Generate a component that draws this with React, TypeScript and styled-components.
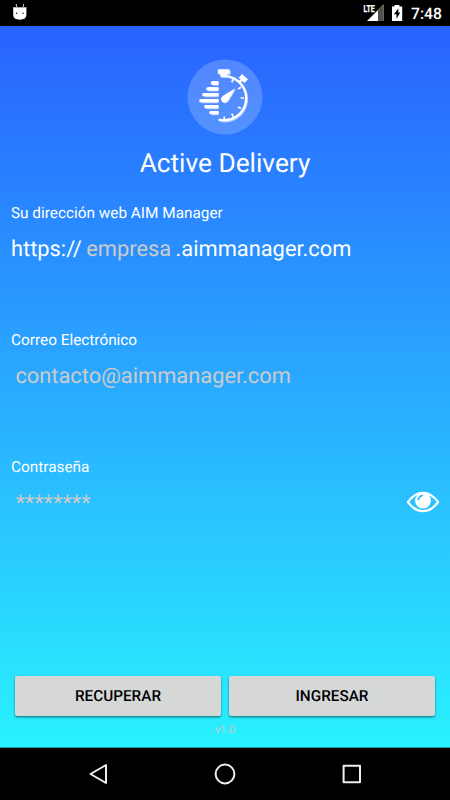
import React from 'react';
import styled, { createGlobalStyle } from 'styled-components';

const GlobalStyle = createGlobalStyle`
  *, *::before, *::after { box-sizing: border-box; }
  html, body { margin: 0; padding: 0; background: #000; }
  body { font-family: Roboto, sans-serif; overflow: hidden; text-rendering: geometricPrecision; }
`;

const Phone = styled.div`
  width: 450px;
  height: 800px;
  display: flex;
  flex-direction: column;
  background: #000;
`;

const StatusBar = styled.header`
  height: 26px;
  flex: none;
  display: flex;
  justify-content: space-between;
  background: #000;
  svg { display: block; flex: none; }
`;

const StatusGroup = styled.div`
  display: flex;
  align-items: flex-start;
`;

const Clock = styled.span`
  width: 39px;
  font-size: 15.7px;
  font-weight: 500;
  line-height: 27px;
  color: #fff;
  white-space: nowrap;
`;

const Screen = styled.main`
  height: 722px;
  flex: none;
  display: flex;
  flex-direction: column;
  background: linear-gradient(#2962ff, #29f2ff);
  border-bottom: 1px solid #1a98a3;
`;

const Brand = styled.div`
  height: 177px;
  flex: none;
  display: flex;
  flex-direction: column;
  align-items: center;
  padding-top: 33px;
  svg { display: block; flex: none; }
`;

const Title = styled.h1`
  margin: 14px 0 0;
  font-size: 26.25px;
  font-weight: 400;
  line-height: 30px;
  color: #fff;
`;

const Field = styled.div`
  height: 127px;
  flex: none;
  padding: 0 11px;
`;

const Label = styled.div`
  height: 33px;
  font-size: 15.35px;
  line-height: 21px;
  color: #fff;
`;

const Entry = styled.div<{ $inset?: number }>`
  display: flex;
  align-items: center;
  height: 28px;
  padding-left: ${(p) => p.$inset ?? 0}px;
  font-size: 21.85px;
  line-height: 28px;
  color: #fff;
  white-space: pre;
  svg { display: block; flex: none; margin: -5px 0 0 auto; }
`;

const Hint = styled.span<{ $gap?: number }>`
  color: #cbcbcb;
  margin: 0 ${(p) => p.$gap ?? 0}px;
`;

const Actions = styled.div`
  display: flex;
  gap: 8px;
  padding: 0 15px;
  margin-top: auto;
`;

const Button = styled.button`
  flex: 1;
  height: 40px;
  border: 0;
  padding: 0;
  border-radius: 2px;
  background: #d6d7d7;
  box-shadow: 0 1px 2px rgba(0, 0, 0, 0.45), 0 2px 3px rgba(0, 0, 0, 0.12);
  font: 500 15.3px/40px Roboto, sans-serif;
  text-rendering: inherit;
  color: #000;
`;

const Version = styled.div`
  height: 31px;
  padding-top: 7px;
  font-size: 11px;
  line-height: 14px;
  text-align: center;
  color: #c3cccd;
`;

const NavBar = styled.nav`
  height: 52px;
  flex: none;
  display: flex;
  justify-content: center;
  gap: 97px;
  padding-top: 11px;
`;

const DroidIcon = () => (
  <svg width="40" height="26" viewBox="0 0 40 26">
    <path d="M13.2 7.2h13.2v7.3q0 5.2-6.6 5.2t-6.6-5.2z" fill="#fff" />
    <path d="M16.8 7.5 16.2 4M23 7.5 23.6 4" stroke="#ccc" strokeWidth="1" />
    <path d="M15 7.6h9.5" stroke="#aaa" strokeWidth="1" />
    <circle cx="16.6" cy="13.2" r=".8" fill="#222" />
    <circle cx="23" cy="13.2" r=".8" fill="#222" />
  </svg>
);

const SignalIcon = () => (
  <svg width="28" height="26" viewBox="0 0 28 26">
    <path d="M21.5 4.5V21H5z" fill="#fff" />
    <path d="M16 10 21.5 4.5V21H16z" fill="#505050" />
    <path d="M0 0h13v13H0z" fill="#000" />
    <text x="1.5" y="12.2" fontFamily="Roboto, sans-serif" fontSize="9.8" fontWeight="700" fill="#fff" stroke="#fff" strokeWidth=".3" textLength="11" lengthAdjust="spacingAndGlyphs">LTE</text>
  </svg>
);

const BatteryIcon = () => (
  <svg width="21" height="26" viewBox="0 0 21 26">
    <path d="M4.4 5h5V6.6h2.8v14.3H2V6.6h2.4z" fill="#fff" />
    <path d="M8.3 8.5 3.9 14.3h2.6v4.4L10.3 12.6H8.3z" fill="#000" />
  </svg>
);

const StopwatchLogo = () => (
  <svg width="76" height="76" viewBox="0 0 76 76">
    <circle cx="38" cy="38" r="37.5" fill="#fff" fillOpacity=".2" />
    <g transform="translate(1 1)" stroke="#a9c4ff" fill="none">
      <path d="M32 60.8A22.1 22.1 0 1 0 42 17.7" strokeWidth="2" />
      <path d="M25.3 24H30.5M20.8 29.8H30.5M16.8 35.7H30.5M13.8 41.7H30.5M18.8 47.7H30.5M23.8 53.6H30.5" strokeWidth="3.3" />
      <path d="M30.8 10.7h12v4.3h-2.5v3h-7v-3h-2.5z" fill="#a9c4ff" stroke="none" />
    </g>
    <g stroke="#fff" fill="none">
      <path d="M31.5 60.6A22.1 22.1 0 1 0 39 17.2" strokeWidth="2.3" />
      <path d="M46.3 20.3l-1.6 3M54 28.2l-2.9 1.7M57 39h-3.3M54 49.6l-2.9-1.7M46.3 57.6l-1.6-3M37.3 61v-3.4" strokeWidth="1.7" />
      <path d="m52 23.5 4-4" strokeWidth="2.4" />
      <path d="m55.2 18.5 2.2 2" strokeWidth="5" strokeLinecap="square" />
      <path d="M25.3 24H31.5M20.8 29.8H31.5M16.8 35.7H31.5M13.8 41.7H31.5M18.8 47.7H31.5M23.8 53.6H31.5" strokeWidth="3.3" />
      <path d="M25.3 24H30M20.8 29.8H30M16.8 35.7H30M13.8 41.7H30M18.8 47.7H30M23.8 53.6H30" strokeWidth="3.3" strokeLinecap="round" />
    </g>
    <path d="M31.3 10.8h10.8v3.6h-2.4v3.2h-5.8v-3.2h-2.6z" fill="#fff" stroke="#fff" strokeLinejoin="round" />
    <path d="M49 30.3 41.6 42.2q-2.6 3.5-5.5 1.3-2.6-2.6.6-5.2z" fill="#c5d7ff" />
    <path d="M48.3 29.3 41 41.3q-2.8 3.7-5.9 1.3-2.6-2.8.6-5.6z" fill="#fff" />
  </svg>
);

const EyeIcon = () => (
  <svg width="32" height="24" viewBox="0 0 32 24">
    <path d="M.8 12Q7.5 2.8 16 2.8T31.2 12Q24.5 21.2 16 21.2T.8 12Z" fill="none" stroke="#fff" strokeWidth="2.2" />
    <circle cx="16" cy="10.6" r="7.9" fill="#fff" />
    <path d="M11.2 9.6q.8-3.4 4.2-4.1" fill="none" stroke="#29bdff" strokeWidth="1.7" strokeLinecap="round" />
  </svg>
);

const NavIcon = ({ kind }: { kind: 'back' | 'home' | 'recent' }) => (
  <svg width="30" height="30" viewBox="0 0 30 30" fill="none" stroke="#efefef" strokeWidth="2" strokeLinejoin="round">
    {kind === 'back' && <path d="M23 6v18L7.5 15z" />}
    {kind === 'home' && <circle cx="15" cy="15" r="9.4" />}
    {kind === 'recent' && <rect x="6.6" y="6.8" width="16.4" height="16.4" />}
  </svg>
);

export default function App() {
  return (
    <Phone>
      <GlobalStyle />
      <StatusBar>
        <DroidIcon />
        <StatusGroup>
          <SignalIcon />
          <BatteryIcon />
          <Clock>7:48</Clock>
        </StatusGroup>
      </StatusBar>
      <Screen>
        <Brand>
          <StopwatchLogo />
          <Title>Active Delivery</Title>
        </Brand>
        <Field>
          <Label>Su dirección web AIM Manager</Label>
          <Entry>
            https://<Hint $gap={4.4}>empresa</Hint>.aimmanager.com
          </Entry>
        </Field>
        <Field>
          <Label>Correo Electrónico</Label>
          <Entry $inset={4.4}>
            <Hint>contacto@aimmanager.com</Hint>
          </Entry>
        </Field>
        <Field>
          <Label>Contraseña</Label>
          <Entry $inset={4.4}>
            <Hint>********</Hint>
            <EyeIcon />
          </Entry>
        </Field>
        <Actions>
          <Button>RECUPERAR</Button>
          <Button>INGRESAR</Button>
        </Actions>
        <Version>v1.0</Version>
      </Screen>
      <NavBar>
        <NavIcon kind="back" />
        <NavIcon kind="home" />
        <NavIcon kind="recent" />
      </NavBar>
    </Phone>
  );
}
